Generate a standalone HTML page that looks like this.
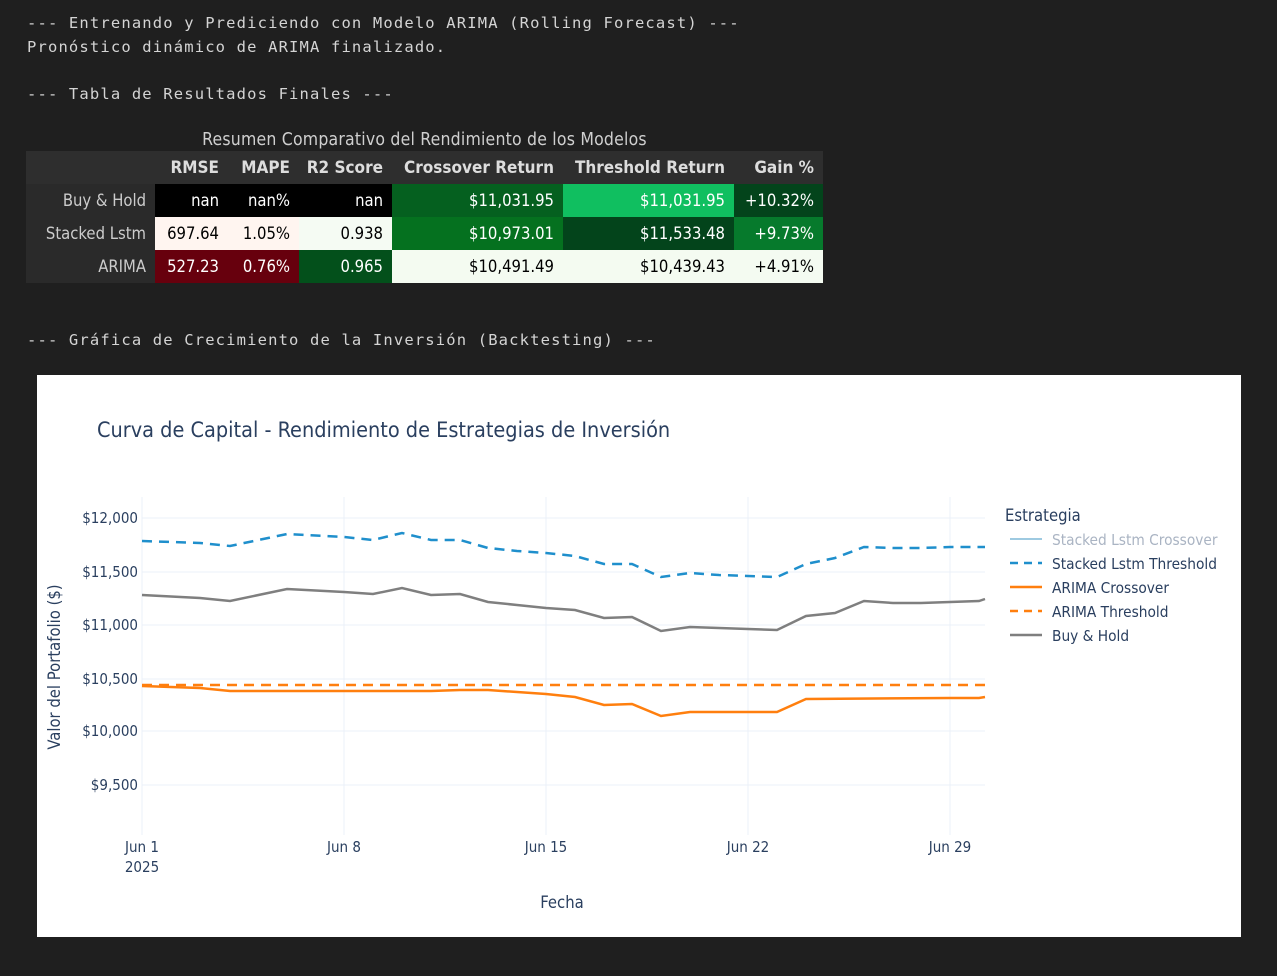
<!DOCTYPE html>
<html><head><meta charset="utf-8"><style>
body{margin:0;background:#1f1f1f;width:1277px;height:976px;overflow:hidden;position:relative;font-family:"Liberation Sans",sans-serif}
.mono{position:absolute;left:27px;font-family:"DejaVu Sans Mono","Liberation Mono",monospace;font-size:15.5px;color:#d4d4d4;white-space:pre;letter-spacing:1.15px}
.cap{position:absolute;left:26px;width:797px;top:130px;text-align:center;color:#cfcfcf;font-size:17.5px;letter-spacing:0.2px;font-family:"DejaVu Sans Condensed","Liberation Sans Narrow","Liberation Sans",sans-serif}
table{position:absolute;left:26px;top:151px;border-collapse:collapse;font-family:"DejaVu Sans Condensed","Liberation Sans Narrow","Liberation Sans",sans-serif;font-size:16.5px;color:#fff}
td,th{padding:0 9px 0 0;text-align:right;height:33px;box-sizing:border-box;white-space:nowrap}
th{background:#2e2e2e;color:#ddd;font-weight:bold;font-size:17px}
td.i{background:#2a2a2a;color:#ccc}
.chart{position:absolute;left:37px;top:375px;width:1204px;height:562px;background:#fff}
</style></head><body>
<div class="mono" style="top:14px">--- Entrenando y Prediciendo con Modelo ARIMA (Rolling Forecast) ---</div>
<div class="mono" style="top:38px">Pronóstico dinámico de ARIMA finalizado.</div>
<div class="mono" style="top:85px">--- Tabla de Resultados Finales ---</div>
<div class="cap">Resumen Comparativo del Rendimiento de los Modelos</div>
<table>
<tr><th style="width:129px"></th><th style="width:73px">RMSE</th><th style="width:71px">MAPE</th><th style="width:93px">R2 Score</th><th style="width:171px">Crossover Return</th><th style="width:171px">Threshold Return</th><th style="width:89px">Gain %</th></tr>
<tr><td class="i">Buy &amp; Hold</td><td style="background:#000">nan</td><td style="background:#000">nan%</td><td style="background:#000">nan</td><td style="background:#05601f">$11,031.95</td><td style="background:#10bf60">$11,031.95</td><td style="background:#03441b">+10.32%</td></tr>
<tr><td class="i">Stacked Lstm</td><td style="background:#fff5f0;color:#000">697.64</td><td style="background:#fff5f0;color:#000">1.05%</td><td style="background:#f5fbf3;color:#000">0.938</td><td style="background:#05711f">$10,973.01</td><td style="background:#03441b">$11,533.48</td><td style="background:#067a2c">+9.73%</td></tr>
<tr><td class="i">ARIMA</td><td style="background:#67000d">527.23</td><td style="background:#67000d">0.76%</td><td style="background:#03501b">0.965</td><td style="background:#f4fbf1;color:#000">$10,491.49</td><td style="background:#f4fbf1;color:#000">$10,439.43</td><td style="background:#f4fbf1;color:#000">+4.91%</td></tr>
</table>
<div class="mono" style="top:331px">--- Gráfica de Crecimiento de la Inversión (Backtesting) ---</div>
<div class="chart">
<svg width="1204" height="562" viewBox="37 375 1204 562" style="font-family:'DejaVu Sans Condensed','Liberation Sans',sans-serif">
<text x="97" y="437" font-size="21.5" fill="#2a3f5f">Curva de Capital - Rendimiento de Estrategias de Inversión</text>
<g stroke="#ebf0f8" stroke-width="1">
<line x1="142" y1="518" x2="985" y2="518"/><line x1="142" y1="572" x2="985" y2="572"/><line x1="142" y1="625" x2="985" y2="625"/><line x1="142" y1="679" x2="985" y2="679"/><line x1="142" y1="731" x2="985" y2="731"/><line x1="142" y1="785" x2="985" y2="785"/>
<line x1="142" y1="497" x2="142" y2="835"/><line x1="344" y1="497" x2="344" y2="835"/><line x1="546" y1="497" x2="546" y2="835"/><line x1="748" y1="497" x2="748" y2="835"/><line x1="950" y1="497" x2="950" y2="835"/>
</g>
<g font-size="15" fill="#2a3f5f" text-anchor="end">
<text x="138" y="523">$12,000</text><text x="138" y="577">$11,500</text><text x="138" y="630">$11,000</text><text x="138" y="684">$10,500</text><text x="138" y="736">$10,000</text><text x="138" y="790">$9,500</text>
</g>
<g font-size="15" fill="#2a3f5f" text-anchor="middle">
<text x="142" y="852">Jun 1</text><text x="142" y="872">2025</text><text x="344" y="852">Jun 8</text><text x="546" y="852">Jun 15</text><text x="748" y="852">Jun 22</text><text x="950" y="852">Jun 29</text>
<text x="562" y="908" font-size="16.5">Fecha</text>
<text transform="translate(60,667) rotate(-90)" font-size="16.5">Valor del Portafolio ($)</text>
</g>
<polyline fill="none" stroke="#ff7f0e" stroke-width="2.5" stroke-dasharray="10,7" points="142,685 985,685"/>
<polyline fill="none" stroke="#ff7f0e" stroke-width="2.5" points="142,686 200,688 230,691 287,691 431,691 460,690 488,690 517,692 546,694 575,697 604,705 632,704 661,716 690,712 777,712 806,699 950,698 979,698 985,697"/>
<polyline fill="none" stroke="#7f7f7f" stroke-width="2.5" points="142,595 200,598 230,601 287,589 344,592 373,594 402,588 431,595 460,594 488,602 517,605 546,608 575,610 604,618 632,617 661,631 690,627 719,628 748,629 777,630 806,616 835,613 864,601 893,603 921,603 950,602 979,601 985,599"/>
<polyline fill="none" stroke="#1f8fcc" stroke-width="2.5" stroke-dasharray="10,7" points="142,541 200,543 230,546 287,534 344,537 373,540 402,533 431,540 460,540 488,548 517,551 546,553 575,556 604,564 632,564 661,577 690,573 719,575 748,576 777,577 806,564 835,558 864,547 893,548 921,548 950,547 985,547"/>
<text x="1005" y="521" font-size="16.5" fill="#2a3f5f">Estrategia</text>
<g font-size="15.3">
<line x1="1010" y1="539" x2="1042" y2="539" stroke="#9ecae1" stroke-width="2"/><text x="1052" y="545" fill="#aab4c3">Stacked Lstm Crossover</text>
<line x1="1010" y1="563" x2="1042" y2="563" stroke="#1f8fcc" stroke-width="2.5" stroke-dasharray="8,6"/><text x="1052" y="569" fill="#2a3f5f">Stacked Lstm Threshold</text>
<line x1="1010" y1="587" x2="1042" y2="587" stroke="#ff7f0e" stroke-width="2.5"/><text x="1052" y="593" fill="#2a3f5f">ARIMA Crossover</text>
<line x1="1010" y1="611" x2="1042" y2="611" stroke="#ff7f0e" stroke-width="2.5" stroke-dasharray="8,6"/><text x="1052" y="617" fill="#2a3f5f">ARIMA Threshold</text>
<line x1="1010" y1="635" x2="1042" y2="635" stroke="#7f7f7f" stroke-width="2.5"/><text x="1052" y="641" fill="#2a3f5f">Buy &amp; Hold</text>
</g>
</svg>
</div>
</body></html>
